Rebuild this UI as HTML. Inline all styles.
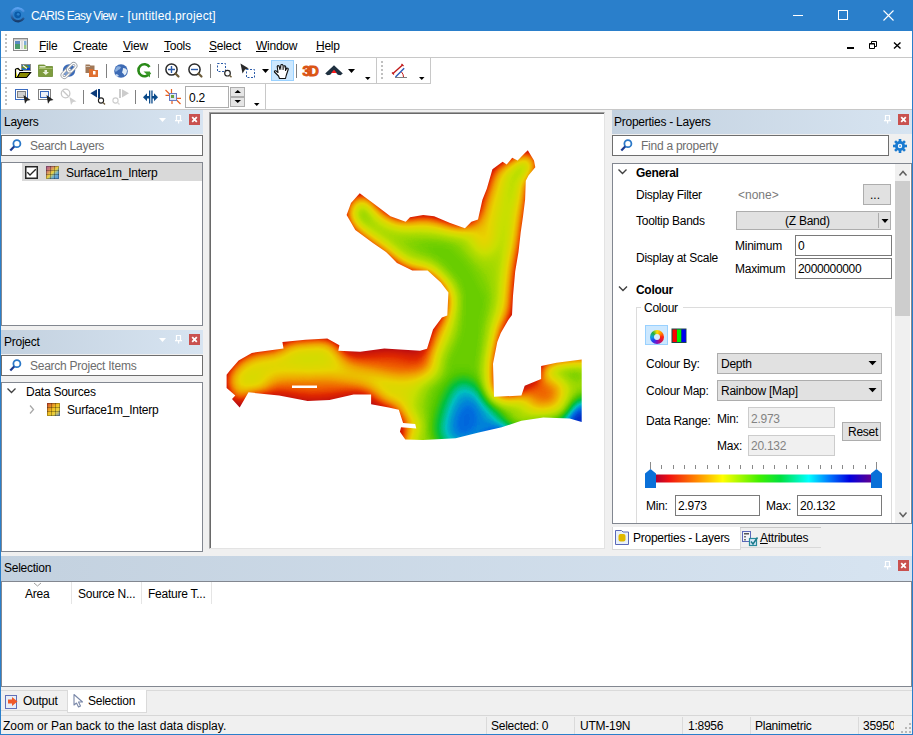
<!DOCTYPE html>
<html><head><meta charset="utf-8">
<style>
*{margin:0;padding:0;box-sizing:border-box}
html,body{width:913px;height:735px;overflow:hidden;background:#f0f0f0;font-family:"Liberation Sans",sans-serif;font-size:12px;color:#000}
.a{position:absolute}
.t{position:absolute;line-height:14px;white-space:pre;letter-spacing:-0.25px}
.u{text-decoration:underline;text-underline-offset:1px}
.hl{position:absolute;height:1px}
.vl{position:absolute;width:1px}
.dock{position:absolute;background:linear-gradient(to right,#c3d1df,#d7e4f1)}
.cls{position:absolute;width:11px;height:11px;background:#c75050}
.box{position:absolute;background:#fff;border:1px solid #828790}
.btn{position:absolute;background:#e1e1e1;border:1px solid #adadad}
.grip{position:absolute;width:2px}
svg{position:absolute;overflow:visible}
</style></head><body>

<!-- title bar -->
<div class="a" style="left:0;top:0;width:913px;height:31px;background:#2a7fcb"></div>
<div class="t" style="left:31px;top:9px;color:#fff"><span style="letter-spacing:-0.7px">CARIS Easy View</span><span style="letter-spacing:0.2px"> - [untitled.project]</span></div>
<!-- window border -->
<div class="a" style="left:0;top:31px;width:1px;height:704px;background:#2a7fcb"></div>
<div class="a" style="left:912px;top:31px;width:1px;height:704px;background:#2a7fcb"></div>
<div class="a" style="left:0;top:734px;width:913px;height:1px;background:#2a7fcb"></div>

<!-- menubar -->
<div class="a" style="left:1px;top:31px;width:911px;height:78px;background:#fff"></div>
<div class="hl" style="left:1px;top:57px;width:911px;background:#c8c8c8"></div>
<div class="t" style="left:39px;top:39px"><span class="u">F</span>ile</div>
<div class="t" style="left:73px;top:39px"><span class="u">C</span>reate</div>
<div class="t" style="left:123px;top:39px"><span class="u">V</span>iew</div>
<div class="t" style="left:164px;top:39px"><span class="u">T</span>ools</div>
<div class="t" style="left:209px;top:39px"><span class="u">S</span>elect</div>
<div class="t" style="left:256px;top:39px"><span class="u">W</span>indow</div>
<div class="t" style="left:316px;top:39px"><span class="u">H</span>elp</div>

<!-- toolbars -->
<div class="hl" style="left:1px;top:83px;width:429px;background:#c8c8c8"></div>
<div class="vl" style="left:376px;top:58px;height:26px;background:#c8c8c8"></div>
<div class="vl" style="left:430px;top:58px;height:26px;background:#c8c8c8"></div>
<div class="vl" style="left:265px;top:84px;height:26px;background:#c8c8c8"></div>
<div class="hl" style="left:1px;top:109px;width:911px;background:#c8c8c8"></div>

<svg style="left:0;top:0" width="913" height="112" viewBox="0 0 913 112">
<!-- title icon -->
<defs><linearGradient id="logo" x1="0" y1="0" x2="0" y2="1"><stop offset="0" stop-color="#5aa2f2"/><stop offset="0.5" stop-color="#3a78c0"/><stop offset="1" stop-color="#173c6c"/></linearGradient></defs>
<path d="M23.3,11 A6.5,6.5 0 1 0 23.3,18.6" fill="none" stroke="url(#logo)" stroke-width="2.4" stroke-linecap="round"/>
<circle cx="17.7" cy="14.8" r="3.4" fill="#0a5aa8"/>
<circle cx="18.2" cy="14.3" r="1.4" fill="#2a80cc"/>
<!-- window controls -->
<rect x="793" y="15" width="10" height="1" fill="#fff"/>
<rect x="838.5" y="10.5" width="9" height="9" fill="none" stroke="#fff" stroke-width="1"/>
<path d="M883.5,10.5 L893.5,20.5 M893.5,10.5 L883.5,20.5" stroke="#fff" stroke-width="1.1"/>
<!-- MDI controls -->
<rect x="847" y="47" width="7" height="2" fill="#000"/>
<path d="M871.5,41.5h5v5h-2 M869.5,43.5h5v5h-5z M871.5,43.5v-2" fill="none" stroke="#000" stroke-width="1"/>
<rect x="869.5" y="43.5" width="5" height="1" fill="#000"/>
<path d="M894,42.5 L900.5,48.5 M900.5,42.5 L894,48.5" stroke="#000" stroke-width="1.4"/>
<!-- menu grip -->
<g fill="#c0c0c0"><rect x="5" y="34" width="2" height="2"/><rect x="5" y="38" width="2" height="2"/><rect x="5" y="42" width="2" height="2"/><rect x="5" y="46" width="2" height="2"/><rect x="5" y="50" width="2" height="2"/></g>
<!-- menu icon -->
<rect x="13.5" y="38.5" width="14" height="12" fill="#f4f4f4" stroke="#8a8a8a"/>
<rect x="14" y="39" width="13" height="1.5" fill="#c8c8c8"/>
<rect x="15" y="41" width="5" height="8" fill="#4a9a6a"/>
<rect x="15" y="41" width="5" height="3" fill="#5a8ac0"/>
<rect x="21" y="41" width="2" height="8" fill="#dcdcdc"/>
<rect x="24" y="41" width="2.5" height="4" fill="#80b0d8"/>
<rect x="24" y="45" width="2.5" height="4" fill="#9ac880"/>
<!-- toolbar grips -->
<g fill="#c0c0c0">
<rect x="5" y="61" width="2" height="2"/><rect x="5" y="65" width="2" height="2"/><rect x="5" y="69" width="2" height="2"/><rect x="5" y="73" width="2" height="2"/><rect x="5" y="77" width="2" height="2"/>
<rect x="5" y="87" width="2" height="2"/><rect x="5" y="91" width="2" height="2"/><rect x="5" y="95" width="2" height="2"/><rect x="5" y="99" width="2" height="2"/><rect x="5" y="103" width="2" height="2"/>
<rect x="381" y="61" width="2" height="2"/><rect x="381" y="65" width="2" height="2"/><rect x="381" y="69" width="2" height="2"/><rect x="381" y="73" width="2" height="2"/><rect x="381" y="77" width="2" height="2"/>
</g>
<!-- 1 open folder -->
<rect x="21.5" y="64.5" width="9" height="6" fill="#1a70c0" stroke="#8a8a8a"/>
<path d="M22,66 L26,65 L29,67 L26,69 L22,68z" fill="#6a8a20"/>
<path d="M23,65.5 L27,68.5" stroke="#fff" stroke-width="1.2"/>
<rect x="27" y="68" width="3" height="2" fill="#0a3ad0"/>
<path d="M15.5,69 L15.5,77.5 L26.5,77.5 L30.5,72.5 L20,72.5 L17.5,77 M15.5,69 L18,68.5 L20,70.5 L23,70.5" fill="#f0f000" stroke="#000" stroke-width="1.2"/>
<path d="M20,72.5 L30.5,72.5 L26.5,77.5 L17.5,77.5z" fill="#8a8a00" stroke="#000" stroke-width="1"/>
<!-- 2 green folder -->
<path d="M38.5,65 h6 l1.5,1.5 h6.5 v10 h-14z" fill="#7e9c3e" stroke="#6a8a30" stroke-width="0.8"/>
<rect x="39.5" y="66" width="6" height="1.6" fill="#d8e4c0"/>
<rect x="39" y="68" width="13.5" height="1" fill="#a8c070"/>
<path d="M44.5,70 h2.5 v2 h2 l-3.2,3 l-3.3,-3 h2z" fill="#e8f0d8"/>
<!-- 3 link -->
<circle cx="69" cy="70.5" r="6.2" fill="#3a6ab8"/>
<circle cx="67" cy="72.5" r="2.8" fill="#7aa0d8"/>
<g transform="translate(66.2,73.3) rotate(-45)"><rect x="-5" y="-2.4" width="10" height="4.8" rx="2.4" fill="none" stroke="#9aa0a8" stroke-width="2.8"/><rect x="-5" y="-2.4" width="10" height="4.8" rx="2.4" fill="none" stroke="#fff" stroke-width="1.3"/></g>
<g transform="translate(71.8,67.7) rotate(-45)"><rect x="-5" y="-2.4" width="10" height="4.8" rx="2.4" fill="none" stroke="#9aa0a8" stroke-width="2.8"/><rect x="-5" y="-2.4" width="10" height="4.8" rx="2.4" fill="none" stroke="#fff" stroke-width="1.3"/></g>
<!-- 4 folders -->
<path d="M85.5,64.5 h4 l1,1 h4 v7.5 h-9z" fill="#a07858"/>
<rect x="86" y="66" width="4" height="1" fill="#d0c0b0"/>
<path d="M89,69 h3.5 l1,1 h4.5 v7 h-9z" fill="#e07030"/>
<rect x="93" y="71" width="2.5" height="3.5" fill="#fff"/>
<!-- sep -->
<rect x="106" y="64" width="1" height="14" fill="#808080"/>
<!-- globe -->
<circle cx="121" cy="71" r="6.8" fill="#3d6bb5"/>
<path d="M117,66.5 q3,-1 4,1 q-1,2 -3,2.5 q-1,2 -3,1.5 q0,-3 2,-5z" fill="#8aaede"/>
<path d="M123,68 q3,0 4,2 q0,4 -2.5,5.5 q-1,-2 -2.5,-3 q1,-2 1,-4.5z" fill="#e0ecf8"/>
<path d="M116,74 q2,0 3,2 q-2,1 -3.5,-0.5z" fill="#c0d4f0"/>
<!-- G -->
<path d="M149.5,67 A6,6 0 1 0 150,72.5" fill="none" stroke="#2a8a18" stroke-width="2.6"/>
<path d="M143.5,71.5 h6.5 v6 l-2,-2" fill="#3a9a28"/>
<!-- sep -->
<rect x="158" y="64" width="1" height="14" fill="#808080"/>
<!-- zoom in -->
<circle cx="171.5" cy="69.5" r="5.6" fill="#fff" stroke="#2a2a2a" stroke-width="1.5"/>
<path d="M168,69.5 h7 M171.5,66 v7" stroke="#2a5aa8" stroke-width="1.4"/>
<path d="M175.5,73.5 L178.5,76.5" stroke="#6a5a38" stroke-width="2.2" stroke-linecap="round"/>
<!-- zoom out -->
<circle cx="194.5" cy="69.5" r="5.6" fill="#fff" stroke="#2a2a2a" stroke-width="1.5"/>
<path d="M191,69.5 h7" stroke="#2a5aa8" stroke-width="1.4"/>
<path d="M198.5,73.5 L201.5,76.5" stroke="#6a5a38" stroke-width="2.2" stroke-linecap="round"/>
<!-- sep -->
<rect x="210" y="64" width="1" height="14" fill="#808080"/>
<!-- dashed zoom -->
<rect x="217.5" y="63.5" width="8" height="8" fill="none" stroke="#2a5aa8" stroke-dasharray="2,1.5"/>
<circle cx="227.5" cy="73.2" r="2.8" fill="#fff" stroke="#222" stroke-width="1.2"/>
<path d="M229.5,75.3 L231.5,77.3" stroke="#6a5a38" stroke-width="1.5"/>
<!-- arrow select -->
<path d="M240.5,63.5 L248.8,68.5 L245,69.5 L242.5,73.5z" fill="#2a2a2a"/>
<rect x="246.5" y="69.5" width="8" height="8" fill="none" stroke="#2a5aa8" stroke-dasharray="2,1.5"/>
<path d="M262,69 h7 l-3.5,4z" fill="#000"/>
<!-- hand button -->
<rect x="271.5" y="60.5" width="22" height="20" fill="#cce8ff" stroke="#99d1ff"/>
<path d="M279.5,78.5 L278.5,76 L274.5,72 Q274,70.5 276,70.8 L278,72.5 L277.2,66.5 Q277.8,65 279,66 L280,69.5 L281,64.8 Q282.5,64 283,65.5 L283.2,69.5 L284.2,65.8 Q285.5,65.5 285.7,66.8 L285.5,70.5 L286.8,68 Q288.5,68 288.2,69.5 L286.2,75.5 L285.5,78.5z" fill="#fff" stroke="#111" stroke-width="1.1" stroke-linejoin="round"/>
<rect x="281.5" y="66" width="2" height="4" fill="#999"/>
<!-- sep -->
<rect x="296" y="64" width="1" height="14" fill="#808080"/>
<!-- 3D -->
<text x="302.6" y="76" font-family="Liberation Sans" font-weight="bold" font-size="14" fill="#e05a18" stroke="#d85010" stroke-width="0.9" letter-spacing="-1.6">3D</text>
<!-- peak -->
<path d="M334,65.3 L342.8,73.6 L340.5,75.2 L337.8,74.8 L334,70.6 L330.2,74.8 L327.5,75.2 L325.2,73.6 Z" fill="#1f3040"/>
<path d="M331.3,72.9 L334,69.8 L336.7,72.9z" fill="#ff1a1a"/>
<path d="M348,69 h7 l-3.5,4z" fill="#000"/>
<path d="M365,77 h5.5 l-2.75,3z" fill="#000"/>
<!-- angle tool -->
<path d="M393,73.5 L402.5,65" stroke="#c01818" stroke-width="1.4"/>
<path d="M392,72.5 l2,2 M401.5,64 l2,2" stroke="#c01818" stroke-width="1.2"/>
<path d="M395.5,77 L404.2,68.3" stroke="#2a5ab8" stroke-width="1.4"/>
<path d="M395,77.5 H407" stroke="#808080" stroke-width="1"/>
<path d="M401.5,72 Q403.5,74 403.5,77" fill="none" stroke="#c01818" stroke-width="1"/>
<path d="M419,77 h5.5 l-2.75,3z" fill="#000"/>
<!-- row 2 -->
<rect x="15.5" y="89.5" width="12" height="10" fill="#fff" stroke="#3a6abf"/>
<rect x="17.5" y="91.5" width="8" height="6" fill="#d0d0d0" stroke="#808080"/>
<path d="M23.5,95 L30.5,100 L27,100.7 L25,103.8z" fill="#222"/>
<rect x="38.5" y="89.5" width="12" height="10" fill="#fff" stroke="#808080"/>
<rect x="40.5" y="91.5" width="8" height="6" fill="#eef2fa" stroke="#3a6abf"/>
<path d="M46.5,95 L53.5,100 L50,100.7 L48,103.8z" fill="#222"/>
<circle cx="65.6" cy="93.5" r="4.3" fill="none" stroke="#c8c8c8" stroke-width="1.3"/>
<path d="M62.6,90.5 L68.6,96.5" stroke="#c8c8c8" stroke-width="1.3"/>
<path d="M69.5,97 L76.5,101.5 L73,102 L71,105z" fill="#cfcfcf"/>
<rect x="83" y="90" width="1" height="14" fill="#808080"/>
<path d="M90.3,93.3 L97,89.2 L97,97.4z" fill="#0a3a7a"/>
<rect x="98" y="89" width="2" height="9" fill="#0a3a7a"/>
<circle cx="101" cy="100.5" r="2.6" fill="#fff" stroke="#222" stroke-width="1.1"/>
<path d="M103,102.5 L105,104.5" stroke="#6a5a38" stroke-width="1.3"/>
<rect x="119" y="89" width="2" height="9" fill="#cccccc"/>
<path d="M122,89.2 L129,93.3 L122,97.4z" fill="#cccccc"/>
<circle cx="115.5" cy="100.5" r="2.6" fill="none" stroke="#cccccc" stroke-width="1.1"/>
<path d="M117.5,102.5 L119.5,104.5" stroke="#d8d8d8" stroke-width="1.3"/>
<rect x="135" y="90" width="1" height="14" fill="#808080"/>
<path d="M143,97.3 L147,93.3 V96 H149 V98.6 H147 V101.3z M158,97.3 L154,93.3 V96 H152 V98.6 H154 V101.3z" fill="#0a4a8a"/>
<rect x="149" y="90.5" width="1.3" height="13" fill="#0a4a8a"/>
<rect x="151.3" y="90.5" width="1.3" height="13" fill="#0a4a8a"/>
<path d="M165.5,90 L169.5,94 M176.5,100 L180.5,104 M171.5,89 V93 M177,98.3 H181 M165.5,95.3 H169 M172,101 v3" stroke="#e86020" stroke-width="1.2"/>
<rect x="169.5" y="93.5" width="7" height="7" fill="#dfe8f8" stroke="#6a7ac0"/>
<rect x="171" y="95" width="3" height="3" fill="#6aa040"/>
<!-- spinbox -->
<rect x="185.5" y="86.5" width="43" height="21" fill="#fff" stroke="#adadad"/>
<rect x="230.5" y="87.5" width="14" height="9" fill="#e5e5e5" stroke="#adadad"/>
<rect x="230.5" y="97.5" width="14" height="9" fill="#e5e5e5" stroke="#adadad"/>
<path d="M234.5,93 h6.5 l-3.25,-3z M234.5,100 h6.5 l-3.25,3z" fill="#000"/>
<path d="M254,103 h5.5 l-2.75,3z" fill="#000"/>
</svg>

<!-- dock area -->
<!-- Layers -->
<div class="dock" style="left:1px;top:110px;width:202px;height:24px"></div>
<div class="t" style="left:4px;top:115px">Layers</div>
<div class="cls" style="left:189px;top:114px"></div>
<div class="box" style="left:1px;top:135px;width:202px;height:21px;border-color:#6e6e6e"></div>
<div class="t" style="left:30px;top:139px;color:#6d6d6d">Search Layers</div>
<div class="box" style="left:1px;top:162px;width:202px;height:164px"></div>
<div class="a" style="left:22px;top:163px;width:180px;height:18px;background:#d9d9d9"></div>
<div class="t" style="left:66px;top:166px">Surface1m_Interp</div>

<!-- Project -->
<div class="dock" style="left:1px;top:330px;width:202px;height:24px"></div>
<div class="t" style="left:4px;top:335px">Project</div>
<div class="cls" style="left:189px;top:334px"></div>
<div class="box" style="left:1px;top:355px;width:202px;height:21px;border-color:#6e6e6e"></div>
<div class="t" style="left:30px;top:359px;color:#6d6d6d">Search Project Items</div>
<div class="box" style="left:1px;top:382px;width:202px;height:170px"></div>
<div class="t" style="left:26px;top:385px">Data Sources</div>
<div class="t" style="left:67px;top:403px">Surface1m_Interp</div>

<!-- Map frame -->
<div class="a" style="left:209px;top:112px;width:396px;height:437px;background:#fff;border-top:1px solid #a0a0a0;border-left:1px solid #a0a0a0;border-right:1px solid #e3e3e3;border-bottom:1px solid #e3e3e3"></div>
<div class="a" style="left:210px;top:113px;width:394px;height:435px;border-top:1px solid #696969;border-left:1px solid #696969"></div>

<svg style="left:0;top:0" width="913" height="735" viewBox="0 0 913 735">
<defs>
<clipPath id="sil"><path d="M346.6,215 L351,203 L359.7,193.2 L372.9,203 L390.4,216.2 L405.7,221.7 L410,217.3 L423.2,215.1 L434.2,216.2 L449.5,222.8 L464.9,228.2 L471.4,221.7 L478,219.5 L482.4,199.8 L486.8,188.8 L491.2,173.5 L492.4,169.3 L502.6,161.8 L506.7,164.5 L512.2,157.7 L517.6,160.4 L524.4,153.6 L527.8,150.2 L534,160.4 L535.3,167.2 L528.5,175.4 L525.8,180.8 L525.1,199.8 L522.9,217.3 L520.7,232.6 L518.5,251.9 L515.2,271.6 L513,295.7 L512,315 L508.3,320 L500.8,332.9 L497.3,341.9 L493,363.8 L494,396.7 L521.4,395.6 L524.7,385.7 L541.1,379.1 L541.1,366 L556.5,362.7 L581.7,359.4 L581.7,421.9 L569.6,418.6 L543.3,417.5 L521.4,420.8 L501.7,427.3 L477.6,432.8 L455.7,438.3 L422.9,440 L405.3,439.4 L399.9,431.7 L401,427.3 L416.3,428.4 L415.2,424 L403.1,423 L398.8,409.8 L388.7,407.6 L371.1,404.3 L371.1,394.5 L353.6,394.5 L329.5,400 L307.6,401 L279.1,395.6 L248.5,392.3 L239.7,407.6 L232,398.9 L235.3,395.6 L226.6,387.9 L226.6,374.8 L229.9,370.4 L238.6,360.5 L251.8,352.9 L283.5,348.5 L282.4,341.9 L305.4,339.7 L327.3,338.6 L339.4,345.2 L338.3,350.7 L360.2,351.8 L384.3,348.5 L420,350.7 L427,348.8 L433,329.6 L441.9,317.6 L447.3,315.4 L448.4,292.4 L440.8,282.6 L427.6,270.5 L412.3,270.5 L397,262.9 L386,251.9 L372.9,243.1 L355.3,230 Z"/></clipPath>
<filter id="dep" filterUnits="userSpaceOnUse" x="205" y="130" width="400" height="330" color-interpolation-filters="sRGB">
<feGaussianBlur stdDeviation="8"/>
<feColorMatrix type="matrix" values="0.72 0.8 -0.6 0 -0.03  0.72 0.8 -0.6 0 -0.03  0.72 0.8 -0.6 0 -0.03  0 0 0 0 1"/>
<feComponentTransfer>
<feFuncR type="table" tableValues="0.565 0.577 0.590 0.602 0.615 0.627 0.640 0.653 0.665 0.678 0.690 0.703 0.715 0.728 0.740 0.753 0.765 0.778 0.791 0.803 0.816 0.828 0.841 0.853 0.866 0.878 0.886 0.894 0.902 0.910 0.918 0.925 0.933 0.941 0.941 0.941 0.941 0.941 0.941 0.941 0.941 0.941 0.941 0.938 0.935 0.932 0.929 0.925 0.922 0.919 0.916 0.913 0.910 0.897 0.885 0.872 0.860 0.847 0.835 0.822 0.809 0.797 0.784 0.761 0.737 0.714 0.690 0.667 0.643 0.620 0.596 0.556 0.515 0.475 0.435 0.394 0.354 0.314 0.261 0.209 0.157 0.105 0.052 0.000 0.000 0.000 0.000 0.000 0.000 0.000 0.000 0.000 0.000 0.000 0.000 0.000 0.000 0.000 0.000 0.000 0.000"/>
<feFuncG type="table" tableValues="0.000 0.004 0.008 0.013 0.017 0.021 0.025 0.029 0.033 0.038 0.042 0.046 0.050 0.054 0.059 0.063 0.072 0.082 0.091 0.100 0.110 0.119 0.129 0.138 0.147 0.157 0.184 0.212 0.239 0.267 0.294 0.322 0.349 0.376 0.404 0.432 0.460 0.488 0.516 0.544 0.572 0.600 0.627 0.648 0.668 0.689 0.709 0.729 0.750 0.770 0.791 0.811 0.831 0.836 0.841 0.845 0.850 0.855 0.860 0.864 0.869 0.874 0.878 0.875 0.871 0.867 0.863 0.859 0.855 0.851 0.847 0.838 0.829 0.820 0.811 0.802 0.793 0.784 0.779 0.774 0.769 0.763 0.758 0.753 0.753 0.753 0.753 0.753 0.753 0.753 0.696 0.639 0.582 0.525 0.468 0.416 0.371 0.325 0.280 0.234 0.188"/>
<feFuncB type="table" tableValues="0.125 0.121 0.117 0.113 0.109 0.105 0.100 0.096 0.092 0.088 0.084 0.079 0.075 0.071 0.067 0.063 0.056 0.050 0.044 0.038 0.031 0.025 0.019 0.013 0.006 0.000 0.000 0.000 0.000 0.000 0.000 0.000 0.000 0.000 0.000 0.000 0.000 0.000 0.000 0.000 0.000 0.000 0.000 0.000 0.000 0.000 0.000 0.000 0.000 0.000 0.000 0.000 0.000 0.000 0.000 0.000 0.000 0.000 0.000 0.000 0.000 0.000 0.000 0.000 0.000 0.000 0.000 0.000 0.000 0.000 0.000 0.000 0.000 0.000 0.000 0.000 0.000 0.000 0.042 0.084 0.125 0.167 0.209 0.251 0.335 0.418 0.502 0.586 0.669 0.753 0.776 0.799 0.821 0.844 0.867 0.870 0.853 0.836 0.819 0.801 0.784"/>
</feComponentTransfer>
</filter>
</defs>
<g clip-path="url(#sil)"><g filter="url(#dep)">
<rect x="205" y="130" width="400" height="330" fill="#000"/>
<path d="M346.6,215 L351,203 L359.7,193.2 L372.9,203 L390.4,216.2 L405.7,221.7 L410,217.3 L423.2,215.1 L434.2,216.2 L449.5,222.8 L464.9,228.2 L471.4,221.7 L478,219.5 L482.4,199.8 L486.8,188.8 L491.2,173.5 L492.4,169.3 L502.6,161.8 L506.7,164.5 L512.2,157.7 L517.6,160.4 L524.4,153.6 L527.8,150.2 L534,160.4 L535.3,167.2 L528.5,175.4 L525.8,180.8 L525.1,199.8 L522.9,217.3 L520.7,232.6 L518.5,251.9 L515.2,271.6 L513,295.7 L512,315 L508.3,320 L500.8,332.9 L497.3,341.9 L493,363.8 L494,396.7 L521.4,395.6 L524.7,385.7 L541.1,379.1 L541.1,366 L556.5,362.7 L581.7,359.4 L581.7,421.9 L569.6,418.6 L543.3,417.5 L521.4,420.8 L501.7,427.3 L477.6,432.8 L455.7,438.3 L422.9,440 L405.3,439.4 L399.9,431.7 L401,427.3 L416.3,428.4 L415.2,424 L403.1,423 L398.8,409.8 L388.7,407.6 L371.1,404.3 L371.1,394.5 L353.6,394.5 L329.5,400 L307.6,401 L279.1,395.6 L248.5,392.3 L239.7,407.6 L232,398.9 L235.3,395.6 L226.6,387.9 L226.6,374.8 L229.9,370.4 L238.6,360.5 L251.8,352.9 L283.5,348.5 L282.4,341.9 L305.4,339.7 L327.3,338.6 L339.4,345.2 L338.3,350.7 L360.2,351.8 L384.3,348.5 L420,350.7 L427,348.8 L433,329.6 L441.9,317.6 L447.3,315.4 L448.4,292.4 L440.8,282.6 L427.6,270.5 L412.3,270.5 L397,262.9 L386,251.9 L372.9,243.1 L355.3,230 Z" fill="#f00"/>
<path d="M405,439 L455,438 L501,427 L543,417 L569,418 L582,422 L582,359 L605,359 L605,460 L400,460z" fill="#f00"/>
<path d="M395,238 L445,232 L475,262 L495,300 L488,340 L482,390 L470,435 L420,440 L425,380 L440,330 L452,290 L425,256z" fill="#ff0" fill-opacity="0.07"/>
<path d="M460,378 Q474,382 488,394 Q502,410 514,432 L512,450 L436,450 Q436,420 444,402 Q450,385 460,378z" fill="#ff0" fill-opacity="0.21"/>
<path d="M470,398 Q482,404 490,412 Q500,424 506,436 L504,450 L452,450 Q452,428 456,416 Q460,402 470,398z" fill="#ff0" fill-opacity="0.11"/>
<path d="M495,428 L582,414 L590,445 L480,450z" fill="#ff0" fill-opacity="0.2"/>
<path d="M572,402 L595,394 L595,432 L564,430z" fill="#ff0" fill-opacity="0.38"/>
<path d="M300,366 L420,380 L428,390 L305,378z" fill="#ff0" fill-opacity="0.08"/>
<path d="M250,383 L262,383 L262,392 L250,392z" fill="#ff0" fill-opacity="0.25"/>
<path d="M285,350 L330,345 L335,360 L290,365z" fill="#ff0" fill-opacity="0.05"/>
<path d="M541,360 L584,355 L584,378 L541,384z" fill="#ff0" fill-opacity="0.12"/>
<path d="M342,212 L358,188 L380,202 L374,220 L352,228z" fill="#ff0" fill-opacity="0.07"/>
<path d="M520,148 L540,158 L536,182 L522,178z" fill="#ff0" fill-opacity="0.15"/>
<path d="M220,335 L345,330 L345,350 L425,350 L432,372 L405,412 L372,412 L330,406 L220,404z" fill="#f0f" fill-opacity="0.22"/>
<path d="M268,379 L330,375 L365,383 L380,394 L378,412 L330,410 L265,406z" fill="#f0f" fill-opacity="0.5"/>
<path d="M338,348 L428,346 L438,372 L400,378 L345,366z" fill="#f0f" fill-opacity="0.55"/>
<path d="M371,394 L400,408 L402,425 L372,405z" fill="#f0f" fill-opacity="0.3"/>
<path d="M524,390 L546,376 L564,380 L560,408 L530,410z" fill="#f0f" fill-opacity="0.6"/>
<path d="M402,410 L402,442 L418,442 L416,412z" fill="#f0f" fill-opacity="0.2"/>
<path d="M425,298 L450,292 L450,330 L438,356 L405,360 L415,322z" fill="#f0f" fill-opacity="0.42"/>
<path d="M350,228 L386,252 L412,270 L428,270 L448,292 L452,300 L440,300 L420,280 L380,262 L345,236z" fill="#f0f" fill-opacity="0.35"/>
<path d="M372,203 L390,214 L434,214 L450,222 L464,228 L452,232 L400,226 L372,214z" fill="#f0f" fill-opacity="0.35"/>
<path d="M520,200 L518,240 L514,280 L510,318 L500,336 L492,330 L502,300 L508,240 L512,200z" fill="#f0f" fill-opacity="0.2"/>
<path d="M480,205 L491,173 L502,162 L510,168 L503,200 L494,245 L482,250z" fill="#f0f" fill-opacity="0.28"/>
<path d="M466,222 L480,216 L490,240 L488,262 L470,240z" fill="#f0f" fill-opacity="0.25"/>
<path d="M512,250 L518,250 L514,300 L510,330 L500,345 L494,340 L504,300z" fill="#f0f" fill-opacity="0.2"/>
</g></g>
<path d="M292,385.5 h25 v2.5 h-25z" fill="#fff"/>
</svg>

<!-- Properties -->
<div class="dock" style="left:612px;top:110px;width:300px;height:24px"></div>
<div class="t" style="left:614px;top:115px">Properties - Layers</div>
<div class="cls" style="left:898px;top:114px"></div>
<div class="box" style="left:612px;top:135px;width:277px;height:21px;border-color:#6e6e6e"></div>
<div class="t" style="left:641px;top:139px;color:#6d6d6d">Find a property</div>
<div class="box" style="left:612px;top:163px;width:300px;height:361px"></div>

<div class="t" style="left:636px;top:166px;font-weight:bold;letter-spacing:-0.3px">General</div>
<div class="t" style="left:636px;top:188px">Display Filter</div>
<div class="t" style="left:738px;top:188px;color:#7a7a7a;letter-spacing:0">&lt;none&gt;</div>
<div class="btn" style="left:863px;top:184px;width:28px;height:21px"></div>
<div class="t" style="left:870px;top:188px;letter-spacing:0">...</div>
<div class="t" style="left:636px;top:214px">Tooltip Bands</div>
<div class="btn" style="left:736px;top:211px;width:155px;height:19px"></div>
<div class="vl" style="left:878px;top:213px;height:15px;background:#adadad"></div>
<div class="t" style="left:785px;top:214px">(Z Band)</div>
<div class="t" style="left:636px;top:251px">Display at Scale</div>
<div class="t" style="left:735px;top:239px">Minimum</div>
<div class="box" style="left:795px;top:235px;width:97px;height:21px;border-color:#7a7a7a"></div>
<div class="t" style="left:798px;top:239px">0</div>
<div class="t" style="left:735px;top:262px">Maximum</div>
<div class="box" style="left:795px;top:258px;width:97px;height:21px;border-color:#7a7a7a"></div>
<div class="t" style="left:798px;top:262px;letter-spacing:-0.35px">2000000000</div>
<div class="t" style="left:636px;top:283px;font-weight:bold;letter-spacing:-0.3px">Colour</div>
<!-- group box -->
<div class="a" style="left:636px;top:307px;width:256px;height:216px;border:1px solid #dcdcdc;border-bottom:none"></div>
<div class="a" style="left:641px;top:303px;width:42px;height:8px;background:#fff"></div>
<div class="t" style="left:644px;top:301px">Colour</div>
<div class="a" style="left:645px;top:325px;width:23px;height:20px;background:#cce8ff;border:1px solid #99d1ff"></div>
<div class="t" style="left:646px;top:357px">Colour By:</div>
<div class="btn" style="left:717px;top:353px;width:165px;height:21px"></div>
<div class="t" style="left:721px;top:357px">Depth</div>
<div class="t" style="left:646px;top:384px">Colour Map:</div>
<div class="btn" style="left:717px;top:380px;width:165px;height:21px"></div>
<div class="t" style="left:721px;top:384px">Rainbow [Map]</div>
<div class="t" style="left:646px;top:414px">Data Range:</div>
<div class="t" style="left:717px;top:412px">Min:</div>
<div class="a" style="left:748px;top:407px;width:87px;height:21px;background:#f0f0f0;border:1px solid #cccccc"></div>
<div class="t" style="left:751px;top:412px;color:#838383">2.973</div>
<div class="t" style="left:717px;top:439px">Max:</div>
<div class="a" style="left:748px;top:435px;width:87px;height:21px;background:#f0f0f0;border:1px solid #cccccc"></div>
<div class="t" style="left:751px;top:439px;color:#838383">20.132</div>
<div class="btn" style="left:842px;top:422px;width:39px;height:19px"></div>
<div class="t" style="left:848px;top:425px">Reset</div>
<div class="t" style="left:646px;top:499px">Min:</div>
<div class="box" style="left:675px;top:495px;width:85px;height:21px;border-color:#7a7a7a"></div>
<div class="t" style="left:678px;top:499px">2.973</div>
<div class="t" style="left:766px;top:499px">Max:</div>
<div class="box" style="left:797px;top:495px;width:85px;height:21px;border-color:#7a7a7a"></div>
<div class="t" style="left:800px;top:499px">20.132</div>
<!-- scrollbar -->
<div class="a" style="left:895px;top:164px;width:15px;height:359px;background:#f0f0f0"></div>
<div class="a" style="left:895px;top:181px;width:15px;height:135px;background:#cdcdcd"></div>
<!-- tree bottom cover & tabs -->
<div class="a" style="left:612px;top:527px;width:129px;height:23px;background:#fff;border:1px solid #d9d9d9;border-top:none"></div>
<div class="hl" style="left:740px;top:527px;width:81px;background:#c8c8c8"></div>
<div class="hl" style="left:740px;top:547px;width:81px;background:#d9d9d9"></div>
<div class="t" style="left:633px;top:531px">Properties - Layers</div>
<div class="t" style="left:760px;top:531px"><span class="u">A</span>ttributes</div>
<div class="a" style="left:650px;top:330px;width:14px;height:14px;border-radius:50%;background:conic-gradient(#ffe000,#ff9000,#ff2010,#d01050,#8010c0,#2040f0,#10a0e0,#20b040,#ffe000)"></div>
<div class="a" style="left:654px;top:334px;width:6px;height:6px;border-radius:50%;background:#d8ecff"></div>
<svg style="left:0;top:0" width="913" height="735" viewBox="0 0 913 735">
<defs>
<linearGradient id="rbw" x1="0" x2="1" y1="0" y2="0">
<stop offset="0" stop-color="#b00030"/>
<stop offset="0.06" stop-color="#f01010"/>
<stop offset="0.18" stop-color="#ff8000"/>
<stop offset="0.31" stop-color="#ffff00"/>
<stop offset="0.48" stop-color="#40f000"/>
<stop offset="0.58" stop-color="#00e040"/>
<stop offset="0.71" stop-color="#00ffff"/>
<stop offset="0.8" stop-color="#0080ff"/>
<stop offset="0.9" stop-color="#0000e0"/>
<stop offset="1" stop-color="#600090"/>
</linearGradient>
</defs>
<path d="M618.5,169.5 L622.5,173.5 L626.5,169.5" fill="none" stroke="#404040" stroke-width="1.4"/>
<path d="M619,286.5 L623,290.5 L627,286.5" fill="none" stroke="#404040" stroke-width="1.4"/>
<path d="M881.5,219 h7 l-3.5,4z" fill="#000"/>
<path d="M868.5,361 h8 l-4,4.3z" fill="#000"/>
<path d="M868.5,388 h8 l-4,4.3z" fill="#000"/>
<!-- rgb bars -->
<rect x="671.5" y="328.5" width="15" height="14.5" fill="#1a4a4a"/>
<rect x="672.5" y="329.5" width="4.3" height="12.5" fill="#ff0000"/>
<rect x="677" y="329.5" width="4.3" height="12.5" fill="#00f000"/>
<rect x="681.5" y="329.5" width="4.3" height="12.5" fill="#0000f0"/>
<!-- slider -->
<rect x="656" y="474.5" width="215" height="8" fill="url(#rbw)"/>
<g fill="#8a8a8a">
<rect x="650" y="462" width="1" height="7"/>
<rect x="661" y="465" width="1" height="4"/><rect x="673" y="465" width="1" height="4"/><rect x="684" y="465" width="1" height="4"/><rect x="695" y="465" width="1" height="4"/><rect x="707" y="465" width="1" height="4"/><rect x="718" y="465" width="1" height="4"/><rect x="729" y="465" width="1" height="4"/><rect x="740" y="465" width="1" height="4"/><rect x="752" y="465" width="1" height="4"/><rect x="763" y="465" width="1" height="4"/><rect x="774" y="465" width="1" height="4"/><rect x="786" y="465" width="1" height="4"/><rect x="797" y="465" width="1" height="4"/><rect x="808" y="465" width="1" height="4"/><rect x="820" y="465" width="1" height="4"/><rect x="831" y="465" width="1" height="4"/><rect x="842" y="465" width="1" height="4"/><rect x="853" y="465" width="1" height="4"/><rect x="865" y="465" width="1" height="4"/>
<rect x="876" y="462" width="1" height="7"/>
</g>
<path d="M645,473.5 L650.5,469 L656,473.5 V488 H645z" fill="#0a70d8"/>
<path d="M871,473.5 L876.5,469 L882,473.5 V488 H871z" fill="#0a70d8"/>
<!-- scroll arrows -->
<path d="M899.5,175.5 L903,171.5 L906.5,175.5" fill="none" stroke="#606060" stroke-width="1.5"/>
<path d="M899.5,512.5 L903,516.5 L906.5,512.5" fill="none" stroke="#606060" stroke-width="1.5"/>
<!-- tab icons -->
<path d="M615.5,530.5 h6 l1.5,1.5 h5.5 v12.5 h-13z" fill="#e8f0fa" stroke="#5a68b8" stroke-width="1"/>
<rect x="618.5" y="534" width="7" height="7.5" rx="2" fill="#e0b800"/>
<rect x="742.5" y="531.5" width="8" height="10" fill="#f0f4fa" stroke="#5a68b8"/>
<rect x="744" y="533" width="5" height="1.5" fill="#555"/>
<rect x="744" y="536" width="2" height="1.5" fill="#777"/>
<rect x="744" y="539" width="2" height="1.5" fill="#777"/>
<rect x="749.5" y="538.5" width="7" height="7" fill="#d8e8f8" stroke="#2a8a9a" stroke-width="1.2"/>
<path d="M751,541.5 L753,544 L757.5,537.5" fill="none" stroke="#1a7a8a" stroke-width="1.5"/>
</svg>

<!-- Selection -->
<div class="dock" style="left:1px;top:556px;width:911px;height:25px"></div>
<div class="t" style="left:4px;top:561px">Selection</div>
<div class="cls" style="left:898px;top:560px"></div>
<div class="box" style="left:1px;top:581px;width:911px;height:106px"></div>


<!-- selection header text -->
<div class="t" style="left:25px;top:587px">Area</div>
<div class="t" style="left:78px;top:587px">Source N...</div>
<div class="t" style="left:148px;top:587px">Feature T...</div>
<!-- bottom tabs -->
<div class="hl" style="left:1px;top:690px;width:911px;background:#dadada"></div>
<div class="hl" style="left:1px;top:710px;width:67px;background:#dadada"></div>
<div class="a" style="left:67px;top:690px;width:80px;height:23px;background:#fff;border:1px solid #dadada;border-top:none"></div>
<div class="t" style="left:23px;top:694px">Output</div>
<div class="t" style="left:88px;top:694px">Selection</div>
<!-- spin text -->
<div class="t" style="left:189px;top:91px">0.2</div>

<svg style="left:0;top:0" width="913" height="735" viewBox="0 0 913 735">
<defs>
<linearGradient id="gridg" x1="0" y1="0" x2="1" y2="1">
<stop offset="0" stop-color="#a05a9a"/><stop offset="0.25" stop-color="#d07a70"/><stop offset="0.5" stop-color="#e8d040"/><stop offset="0.7" stop-color="#70b0d0"/><stop offset="1" stop-color="#4a8ae0"/>
</linearGradient>
<linearGradient id="gridg2" x1="0" y1="0" x2="1" y2="1">
<stop offset="0" stop-color="#d04030"/><stop offset="0.45" stop-color="#f0c020"/><stop offset="0.7" stop-color="#e8d040"/><stop offset="1" stop-color="#5a8ae0"/>
</linearGradient>
<g id="ttl">
<path d="M159,118 h7 l-3.5,4z" fill="#fff"/>
<path d="M176.5,115.5 h4 v5 h-4z" fill="none" stroke="#fff" stroke-width="1.2"/>
<rect x="175" y="120" width="7" height="1.3" fill="#fff"/>
<rect x="178" y="121" width="1.2" height="2.5" fill="#fff"/>
<rect x="189" y="114" width="11" height="11" fill="#c9514f"/>
<path d="M192.2,117.2 L196.8,121.8 M196.8,117.2 L192.2,121.8" stroke="#fff" stroke-width="1.8"/>
</g>
<g id="srch">
<circle cx="16.9" cy="143.7" r="3.5" fill="none" stroke="#2a78c8" stroke-width="1.8"/>
<path d="M14.2,146.6 L10.3,150.6" stroke="#1a3a90" stroke-width="2.2"/>
</g>
<g id="grid">
<rect x="46" y="166" width="13" height="13" fill="url(#gridg)"/>
<path d="M46.5,166.5 h12 v12 h-12z M50.5,166 v13 M54.5,166 v13 M46,170.5 h13 M46,174.5 h13" fill="none" stroke="#000" stroke-opacity="0.28" stroke-width="1"/>
</g>
</defs>
<!-- Layers title buttons -->
<use href="#ttl"/>
<use href="#srch"/>
<!-- checkbox -->
<rect x="25.75" y="166.75" width="11.5" height="11.5" fill="#fff" stroke="#262626" stroke-width="1.5"/>
<path d="M27.3,172.2 L30,175 L35.8,169.2" fill="none" stroke="#262626" stroke-width="1.3"/>
<use href="#grid"/>
<!-- Project -->
<use href="#ttl" transform="translate(0,220)"/>
<use href="#srch" transform="translate(0,220)"/>
<path d="M7.5,388.5 L11.5,392.5 L15.5,388.5" fill="none" stroke="#404040" stroke-width="1.3"/>
<path d="M30,405.5 L33.5,409.5 L30,413.5" fill="none" stroke="#a8a8a8" stroke-width="1.3"/>
<g transform="translate(1,237)">
<rect x="46" y="166" width="13" height="13" fill="url(#gridg2)"/>
<path d="M46.5,166.5 h12 v12 h-12z M50.5,166 v13 M54.5,166 v13 M46,170.5 h13 M46,174.5 h13" fill="none" stroke="#000" stroke-opacity="0.28" stroke-width="1"/>
</g>
<!-- Properties title buttons -->
<g transform="translate(709,0)">
<path d="M176.5,115.5 h4 v5 h-4z" fill="none" stroke="#fff" stroke-width="1.2"/>
<rect x="175" y="120" width="7" height="1.3" fill="#fff"/>
<rect x="178" y="121" width="1.2" height="2.5" fill="#fff"/>
<rect x="189" y="114" width="11" height="11" fill="#c9514f"/>
<path d="M192.2,117.2 L196.8,121.8 M196.8,117.2 L192.2,121.8" stroke="#fff" stroke-width="1.8"/>
</g>
<use href="#srch" transform="translate(611,0)"/>
<!-- gear -->
<g transform="translate(900,146)">
<g fill="#1a7ad0">
<circle r="5"/>
<rect x="-1.3" y="-7" width="2.6" height="14"/>
<rect x="-1.3" y="-7" width="2.6" height="14" transform="rotate(45)"/>
<rect x="-1.3" y="-7" width="2.6" height="14" transform="rotate(90)"/>
<rect x="-1.3" y="-7" width="2.6" height="14" transform="rotate(135)"/>
</g>
<circle r="2.2" fill="#fff"/>
<circle r="1.2" fill="#6ab0f0"/>
</g>
<!-- Selection title buttons -->
<g transform="translate(709,446)">
<path d="M176.5,115.5 h4 v5 h-4z" fill="none" stroke="#fff" stroke-width="1.2"/>
<rect x="175" y="120" width="7" height="1.3" fill="#fff"/>
<rect x="178" y="121" width="1.2" height="2.5" fill="#fff"/>
<rect x="189" y="114" width="11" height="11" fill="#c9514f"/>
<path d="M192.2,117.2 L196.8,121.8 M196.8,117.2 L192.2,121.8" stroke="#fff" stroke-width="1.8"/>
</g>
<!-- selection header -->
<path d="M34,583 L37.5,586 L41,583" fill="none" stroke="#a0a0a0" stroke-width="1"/>
<rect x="71" y="582" width="1" height="22" fill="#e5e5e5"/>
<rect x="141" y="582" width="1" height="22" fill="#e5e5e5"/>
<rect x="211" y="582" width="1" height="22" fill="#e5e5e5"/>
<!-- output icon -->
<rect x="5.5" y="695.5" width="11" height="13" fill="#e8eef8" stroke="#6070b8"/>
<path d="M8,699.5 h4 v-2.5 l5.5,4.5 l-5.5,4.5 v-2.5 h-4z" fill="#f05a28"/>
<!-- selection cursor -->
<path d="M74,694.5 L74,705 L76.5,703 L78.5,707 L80.5,706 L78.5,702 L82.5,702z" fill="#fff" stroke="#7a88a8" stroke-width="1.1" stroke-linejoin="round"/>
<!-- status separators -->
<rect x="486" y="717" width="1" height="17" fill="#dadada"/>
<rect x="574" y="717" width="1" height="17" fill="#dadada"/>
<rect x="682" y="717" width="1" height="17" fill="#dadada"/>
<rect x="750" y="717" width="1" height="17" fill="#dadada"/>
<rect x="858" y="717" width="1" height="17" fill="#dadada"/>
<g fill="#b8b8b8"><rect x="909" y="723" width="2" height="2"/><rect x="905" y="727" width="2" height="2"/><rect x="909" y="727" width="2" height="2"/><rect x="901" y="731" width="2" height="2"/><rect x="905" y="731" width="2" height="2"/><rect x="909" y="731" width="2" height="2"/></g>
</svg>

<!-- status bar -->
<div class="hl" style="left:1px;top:715px;width:911px;background:#d7d7d7"></div>
<div class="t" style="left:3px;top:719px;letter-spacing:0">Zoom or Pan back to the last data display.</div>
<div class="t" style="left:491px;top:719px">Selected: 0</div>
<div class="t" style="left:580px;top:719px">UTM-19N</div>
<div class="t" style="left:688px;top:719px">1:8956</div>
<div class="t" style="left:755px;top:719px">Planimetric</div>
<div class="t" style="left:863px;top:719px;width:31px;overflow:hidden">35950</div>

</body></html>
